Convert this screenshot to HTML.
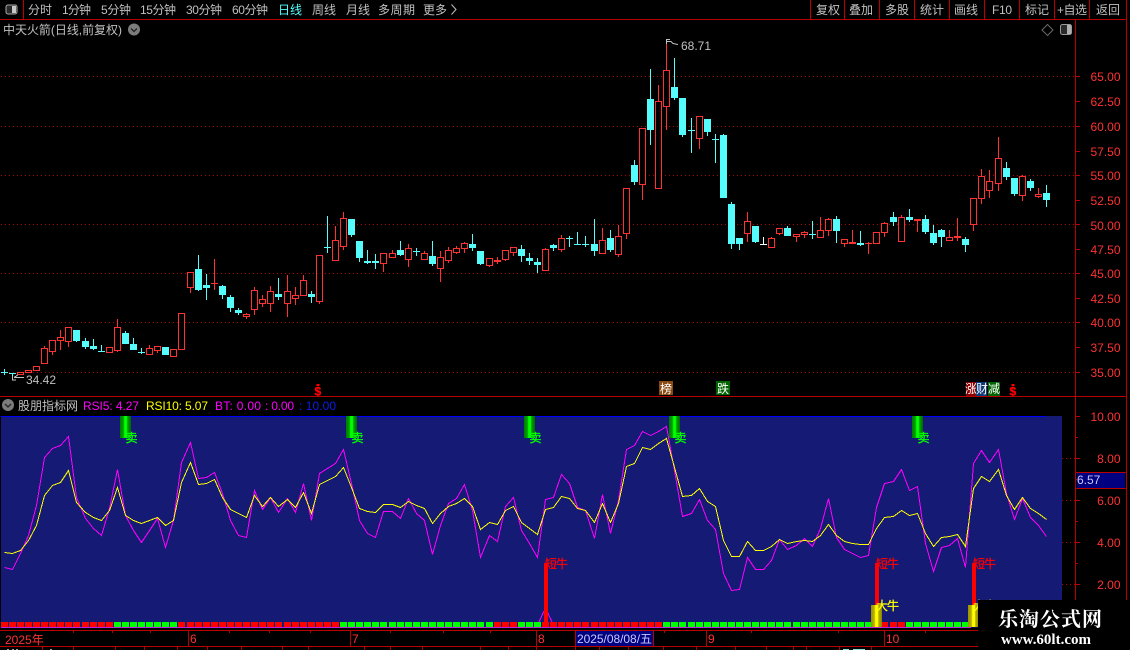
<!DOCTYPE html>
<html><head><meta charset="utf-8">
<style>
html,body{margin:0;padding:0;background:#000;width:1130px;height:650px;overflow:hidden}
svg{display:block;position:absolute;left:0;top:0}
text{font-family:"Liberation Sans","WenQuanYi Zen Hei","Noto Sans CJK SC",sans-serif;font-size:12px}
.m{fill:#c0c0c0}
.a{fill:#ff3232;text-anchor:end}
.d{fill:#ff3232}
</style></head>
<body>
<svg width="1130" height="650" viewBox="0 0 1130 650" xmlns="http://www.w3.org/2000/svg">
<defs>
<linearGradient id="gg" x1="0" x2="1" y1="0" y2="0"><stop offset="0" stop-color="#007a00"/><stop offset=".3" stop-color="#00a000"/><stop offset=".42" stop-color="#00ff00"/><stop offset=".6" stop-color="#00ff00"/><stop offset=".7" stop-color="#00a000"/><stop offset="1" stop-color="#006800"/></linearGradient>
<linearGradient id="yg" x1="0" x2="1" y1="0" y2="0"><stop offset="0" stop-color="#9a9000"/><stop offset=".3" stop-color="#b8b000"/><stop offset=".42" stop-color="#ffff00"/><stop offset=".6" stop-color="#ffff00"/><stop offset=".7" stop-color="#b8b000"/><stop offset="1" stop-color="#8a8000"/></linearGradient>
</defs>
<rect width="1130" height="650" fill="#000"/>

<!-- indicator background -->
<rect x="1" y="416" width="1061" height="211.5" fill="#151b74"/>

<!-- grid -->
<g stroke="#b00000" stroke-dasharray="1 3" shape-rendering="crispEdges" fill="none">
<path d="M1 76.5H1075M1 126.5H1075M1 175.5H1075M1 224.5H1075M1 273.5H1075M1 322.5H1075M1 372.5H1075"/>
<path d="M1062 458.5H1075M1062 500.5H1075M1062 542.5H1075M1062 584.5H1075"/>
</g>

<g id="cw" shape-rendering="crispEdges"></g>

<!-- frame lines -->
<g stroke="#b80000" stroke-width="1" shape-rendering="crispEdges" fill="none">
<path d="M0 19.5H1126.5M0 396.5H1126.5M0 630.5H1126.5M0 646.5H1126.5"/>
<path d="M23.5 0V19M810.5 0V19M844.5 0V19M879.5 0V19M914.5 0V19M949.5 0V19M984.5 0V19M1019.5 0V19M1054.5 0V19M1089.5 0V19"/>
<path d="M1075.5 19V630M1126.5 0V646"/>
<path d="M1075 472.5H1126M1075 488.5H1126"/>
<path d="M1075 76.5h5M1075 101.5h5M1075 126.5h5M1075 151.5h5M1075 175.5h5M1075 200.5h5M1075 224.5h5M1075 249.5h5M1075 273.5h5M1075 298.5h5M1075 322.5h5M1075 347.5h5M1075 372.5h5"/>
<path d="M1075 416.5h5M1075 458.5h5M1075 500.5h5M1075 542.5h5M1075 584.5h5M1075 437.5h3M1075 479.5h3M1075 521.5h3M1075 563.5h3M1075 605.5h3"/>
<path d="M188.5 631V646M350.5 631V646M536.5 631V646M706.5 631V646M884.5 631V646"/>
<path d="M73.5 631v2M112.5 631v2M150.5 631v2M229.5 631v2M269.5 631v2M310.5 631v2M390.5 631v2M443.5 631v2M490.5 631v2M664.5 631v2M751.5 631v2M838.5 631v2M925.5 631v2"/>
<path d="M42.5 647v3M73.5 647v3M115.5 647v3M144.5 647v3M177.5 647v3M207.5 647v3M241.5 647v3M282.5 647v3M308.5 647v3M364.5 647v3M390.5 647v3M422.5 647v3M480.5 647v3M508.5 647v3M536.5 647v3M575.5 647v3M599.5 647v3M628.5 647v3M663.5 647v3M696.5 647v3M735.5 647v3M766.5 647v3M793.5 647v3M806.5 647v3M839.5 647v3M871.5 647v3"/>
</g>

<!-- top menu -->
<g>
<text class="m" x="28" y="14" textLength="24">分时</text>
<text class="m" x="62" y="14" textLength="29">1分钟</text>
<text class="m" x="101" y="14" textLength="30">5分钟</text>
<text class="m" x="140" y="14" textLength="36">15分钟</text>
<text class="m" x="186" y="14" textLength="36">30分钟</text>
<text class="m" x="232" y="14" textLength="36">60分钟</text>
<text x="278" y="14" textLength="24" fill="#55ffff">日线</text>
<text class="m" x="312" y="14" textLength="24">周线</text>
<text class="m" x="346" y="14" textLength="24">月线</text>
<text class="m" x="378" y="14" textLength="37">多周期</text>
<text class="m" x="423" y="14" textLength="24">更多</text>
<path d="M451.5 4.5L456 9.5L451.5 14.5" fill="none" stroke="#c0c0c0"/>
<text class="m" x="816" y="14" textLength="24">复权</text>
<text class="m" x="849" y="14" textLength="24">叠加</text>
<text class="m" x="885" y="14" textLength="24">多股</text>
<text class="m" x="920" y="14" textLength="24">统计</text>
<text class="m" x="954" y="14" textLength="24">画线</text>
<text class="m" x="992" y="14" textLength="20">F10</text>
<text class="m" x="1025" y="14" textLength="24">标记</text>
<text class="m" x="1057" y="14" textLength="30">+自选</text>
<text class="m" x="1096" y="14" textLength="24">返回</text>
</g>

<!-- left layout icon -->
<rect x="6" y="5" width="11" height="9" rx="2" fill="#2a2a2a" stroke="#a8a8a8"/>
<rect x="12" y="6" width="4" height="7" fill="#c8c8c8"/>

<!-- title row -->
<text class="m" x="3" y="34" textLength="119">中天火箭(日线,前复权)</text>
<circle cx="134" cy="29.5" r="6" fill="#7c7c7c"/>
<path d="M131 28.5L134 31.5L137 28.5" fill="none" stroke="#222" stroke-width="1.3"/>
<path d="M1047.5 24.5L1053 30L1047.5 35.5L1042 30Z" fill="none" stroke="#686868"/>
<rect x="1060.5" y="24.5" width="11" height="10" rx="2" fill="#2a2a2a" stroke="#9a9a9a"/>
<rect x="1067" y="25" width="4" height="9" fill="#b0b0b0"/>

<!-- axis labels main -->
<g>
<text class="a" x="1120.5" y="81">65.00</text>
<text class="a" x="1120.5" y="106">62.50</text>
<text class="a" x="1120.5" y="131">60.00</text>
<text class="a" x="1120.5" y="156">57.50</text>
<text class="a" x="1120.5" y="180">55.00</text>
<text class="a" x="1120.5" y="205">52.50</text>
<text class="a" x="1120.5" y="230">50.00</text>
<text class="a" x="1120.5" y="254">47.50</text>
<text class="a" x="1120.5" y="278">45.00</text>
<text class="a" x="1120.5" y="303">42.50</text>
<text class="a" x="1120.5" y="327">40.00</text>
<text class="a" x="1120.5" y="352">37.50</text>
<text class="a" x="1120.5" y="377">35.00</text>
<text class="a" x="1120.5" y="421">10.00</text>
<text class="a" x="1120.5" y="463">8.00</text>
<text class="a" x="1120.5" y="505">6.00</text>
<text class="a" x="1120.5" y="547">4.00</text>
<text class="a" x="1120.5" y="589">2.00</text>
</g>
<rect x="1077" y="473" width="48" height="15" fill="#000080"/>
<text x="1077" y="484" fill="#c8c8ff">6.57</text>

<!-- high/low annotations -->
<path d="M24 377.5H14M14 377.5L18 375M12.5 376V380H16" fill="none" stroke="#c0c0c0" shape-rendering="crispEdges"/>
<text class="m" x="26" y="384">34.42</text>
<path d="M666.5 44V39.5H670M667 41.5H671L673 43.5L678 44.5" fill="none" stroke="#c0c0c0"/>
<text class="m" x="681" y="50">68.71</text>

<!-- markers on main -->
<path d="M318 384v2" stroke="#ff0000" stroke-width="3"/>
<text x="314.5" y="395.5" fill="#ff0000" stroke="#ff0000" stroke-width=".3" style="font-size:12px;font-weight:bold">$</text>
<path d="M1013 384v2" stroke="#ff0000" stroke-width="3"/>
<text x="1009.5" y="395.5" fill="#ff0000" stroke="#ff0000" stroke-width=".3" style="font-size:12px;font-weight:bold">$</text>
<rect x="659" y="381" width="14" height="14" fill="#8b4a10"/><text x="660" y="393" fill="#fff">榜</text>
<rect x="716" y="381" width="14" height="14" fill="#006400"/><text x="717" y="393" fill="#fff">跌</text>
<rect x="966" y="382" width="10" height="14" fill="#8b0000"/><text x="965" y="393" fill="#fff">涨</text>
<rect x="976" y="382" width="11" height="14" fill="#0a3a78"/><text x="976" y="393" fill="#fff">财</text>
<rect x="988" y="382" width="12" height="14" fill="#006400"/><text x="988" y="393" fill="#fff">减</text>

<!-- indicator header -->
<circle cx="8" cy="405" r="6" fill="#7c7c7c"/>
<path d="M5 404L8 407L11 404" fill="none" stroke="#222" stroke-width="1.3"/>
<text class="m" x="18" y="410" textLength="60">股朋指标网</text>
<text x="83" y="410" fill="#ff00ff" textLength="56">RSI5: 4.27</text>
<text x="146" y="410" fill="#ffff00" textLength="62">RSI10: 5.07</text>
<text x="215" y="410" fill="#ff00ff" textLength="46">BT: 0.00</text>
<text x="265" y="410" fill="#ff00ff" textLength="29">: 0.00</text>
<text x="299" y="410" fill="#0a1fe8" textLength="37">: 10.00</text>

<!-- blue top line -->
<rect x="1" y="416" width="1045" height="1" fill="#0000ff"/>

<g id="ln" shape-rendering="crispEdges"></g>

<!-- spikes at bars -->
<path d="M539 622L544 611M552 622L547 611" stroke="#ff00ff" fill="none" shape-rendering="crispEdges"/>

<!-- sell bars -->
<g fill="url(#gg)">
<rect x="120" y="416" width="11" height="22"/>
<rect x="346" y="416" width="11" height="22"/>
<rect x="524" y="416" width="11" height="22"/>
<rect x="669" y="416" width="11" height="22"/>
<rect x="912" y="416" width="11" height="22"/>
</g>
<g fill="#00ff00" stroke="#00ff00" stroke-width=".35">
<text x="125.5" y="442">卖</text>
<text x="351.5" y="442">卖</text>
<text x="529.5" y="442">卖</text>
<text x="674.5" y="442">卖</text>
<text x="917.5" y="442">卖</text>
</g>

<!-- strip -->
<g id="st" shape-rendering="crispEdges"></g>

<!-- red bars -->
<g fill="#ff0000">
<rect x="544" y="563" width="4" height="64"/>
<rect x="875" y="563" width="4" height="64"/>
<rect x="972" y="563" width="4" height="64"/>
</g>
<!-- yellow bars -->
<rect x="871" y="605" width="11" height="22" fill="url(#yg)"/>
<rect x="968" y="605" width="11" height="22" fill="url(#yg)"/>
<g fill="#ff0000" stroke="#ff0000" stroke-width=".3">
<text x="545" y="568" textLength="23">短牛</text>
<text x="876" y="568" textLength="23">短牛</text>
<text x="973" y="568" textLength="23">短牛</text>
</g>
<g fill="#ffff00" stroke="#ffff00" stroke-width=".3">
<text x="876" y="610" textLength="23">大牛</text>
<text x="973" y="610" textLength="23">大牛</text>
</g>

<!-- date axis -->
<text class="d" x="5" y="644">2025年</text>
<text class="d" x="190" y="643">6</text>
<text class="d" x="352" y="643">7</text>
<text class="d" x="538" y="643">8</text>
<text class="d" x="708" y="643">9</text>
<text class="d" x="886" y="643">10</text>
<rect x="575.5" y="630.5" width="78" height="16" fill="#000080" stroke="#b80000" shape-rendering="crispEdges"/>
<text x="577" y="643" fill="#c8c8ff" textLength="75">2025/08/08/五</text>

<!-- bottom cut text remnants -->
<g fill="#a0a0a0" shape-rendering="crispEdges">
<rect x="7" y="649" width="2" height="1"/><rect x="12" y="649" width="2" height="1"/><rect x="16" y="649" width="2" height="1"/><rect x="50" y="649" width="2" height="1"/>
<rect x="843" y="649" width="6" height="1" fill="#8adede"/><rect x="853" y="649" width="12" height="1" fill="#8adede"/>
</g>

<!-- watermark -->
<rect x="978" y="600" width="152" height="50" fill="#000"/>
<text x="998" y="626" fill="#fff" textLength="104" style="font-family:'Noto Serif CJK SC','Liberation Serif',serif;font-size:20px;font-weight:bold">乐淘公式网</text>
<text x="1001" y="644" fill="#fff" textLength="90" style="font-family:'Liberation Serif',serif;font-size:15px;font-weight:bold">www.60lt.com</text>
</svg>

<script>
var C="c372 373 369 375;c373 374 373 377;r372 375 372 375;r370 373 370 373;r366 371 366 371;r348 364 346 364;r340 352 340 355;r337 341 330 350;r327 342 327 347;c330 341 330 342;c341 347 338 349;c346 349 339 350;c351 352 345 352;r347 353 347 353;r327 351 319 352;c333 344 331 344;c344 350 338 350;c352 353 348 354;r348 355 345 355;r346 351 346 353;c347 355 347 355;r349 357 349 357;r313 350 313 350;r272 288 272 293;c269 290 255 291;c285 288 274 300;r283 284 259 290;c286 295 285 299;c297 308 295 312;c310 313 308 315;r314 317 313 319;r290 310 287 315;r299 304 295 307;r291 304 286 312;c294 297 278 300;r291 304 275 317;r295 299 287 305;r280 296 275 296;c294 297 291 303;r255 302 255 304;c247 248 216 253;r240 261 226 261;r218 247 212 250;c219 235 219 237;c241 258 241 262;c261 263 250 264;c261 263 254 269;r253 264 253 272;r253 258 250 258;c250 255 241 256;r248 260 244 267;c251 252 248 256;r253 260 251 260;c256 264 241 266;r257 269 251 282;r250 261 247 263;r248 253 246 254;r243 249 242 253;c244 248 234 251;c251 264 251 265;r258 266 258 267;r260 262 257 264;r250 260 250 261;r247 253 247 256;c249 256 245 262;c258 261 253 265;c262 265 258 273;r249 271 248 271;c245 248 244 251;r238 250 235 252;c238 239 236 247;c244 245 232 245;c244 245 236 247;c244 251 219 256;r240 254 228 254;c238 250 230 252;r236 255 225 257;r188 234 188 239;c165 182 160 185;r128 185 128 200;c99 130 69 145;r101 189 85 189;r70 107 43 130;c87 98 58 100;c98 135 98 137;c130 131 118 153;r116 139 116 149;c119 132 119 136;c139 140 134 163;c135 198 134 198;c204 244 202 249;c238 244 238 250;r221 234 212 242;c226 242 226 243;w244 245 237 245;r238 248 237 248;r228 234 228 235;c228 236 226 236;r234 237 234 242;r232 235 231 238;c234 235 221 239;r230 238 217 238;r219 231 218 236;c219 231 216 243;r239 244 239 247;r242 244 230 244;c243 245 231 246;r243 244 242 254;r232 244 232 244;r223 233 222 237;c217 222 212 226;r217 242 215 242;c217 220 209 222;r219 221 219 232;c219 232 215 234;c233 243 225 245;c230 237 229 247;r237 241 230 241;r236 238 218 241;c239 245 237 252;r198 225 198 231;r176 199 169 204;r181 191 170 198;r158 184 137 191;c168 177 162 180;c178 194 178 196;r176 196 175 201;c181 188 179 191;r194 197 188 198;c193 200 185 207";
var Yv=[552,553,550,540,525,495,485,482,470,502,512,517,520,510,487,515,520,523,520,517,525,520,482,462,484,483,479,497,509,513,517,495,506,497,506,499,507,492,513,484,480,476,467,487,508,511,512,504,504,507,501,505,508,523,513,506,503,498,506,529,522,524,510,506,522,528,534,509,507,496,498,508,510,522,503,522,503,466,463,447,449,443,438,467,496,495,488,501,506,540,556,556,541,550,550,546,539,543,541,540,541,535,524,535,541,543,544,544,528,517,516,510,515,513,533,546,537,536,534,546,488,476,481,469,495,509,497,508,513,519];
var Mv=[567,569,553,535,505,457,448,445,436,497,518,528,535,508,469,515,530,542,530,518,547,520,462,442,478,477,472,493,520,535,537,490,509,497,512,498,512,483,520,473,468,463,449,483,520,533,537,511,511,518,498,513,520,554,525,503,498,484,510,557,535,541,506,497,530,543,557,499,497,474,483,507,510,538,494,533,500,449,445,431,435,431,426,470,516,513,499,520,529,573,590,589,557,569,569,560,539,549,545,538,546,528,498,537,549,553,557,555,507,483,481,469,490,486,543,571,547,545,538,567,463,450,462,449,493,519,498,517,525,536];
function X(i){return Math.floor(4.2+8.08*i)}
var col={r:'#ff3232',c:'#54fcfc',w:'#ffffff'},h='';
C.split(';').forEach(function(s,i){
 var t=s[0],p=s.slice(1).split(' ').map(Number),cx=X(i),c=col[t],top=p[0],bot=p[1],hi=p[2],lo=p[3];
 if(hi<top)h+='<rect x="'+cx+'" y="'+hi+'" width="1" height="'+(top-hi)+'" fill="'+c+'"/>';
 if(lo>bot)h+='<rect x="'+cx+'" y="'+bot+'" width="1" height="'+(lo-bot)+'" fill="'+c+'"/>';
 if(t!='r'||bot-top<=2)h+='<rect x="'+(cx-3)+'" y="'+top+'" width="7" height="'+(bot-top)+'" fill="'+c+'"/>';
 else h+='<rect x="'+(cx-2.5)+'" y="'+(top+.5)+'" width="6" height="'+(bot-top-1)+'" fill="#000" stroke="'+c+'"/>';
});
document.getElementById('cw').innerHTML=h;
function pl(a,c){return '<polyline fill="none" stroke="'+c+'" stroke-width="1" points="'+a.map(function(y,i){return (X(i)+.5)+','+(y+.5)}).join(' ')+'"/>'}
document.getElementById('ln').innerHTML=pl(Mv,'#ff00ff')+pl(Yv,'#ffff00');
var s='<rect x="1" y="627" width="970" height="1" fill="#c020e0"/>';
function kind(i){if(i<=13)return 'r';if(i<=21)return 'g';if(i<=41)return 'r';if(i<=60)return 'g';if(i<=63)return 'r';if(i<=66)return 'g';if(i<=81)return 'r';if(i<=107)return 'g';if(i==108)return '';if(i<=111)return 'r';if(i<=119)return 'g';return ''}
for(var i=0;i<122;i++){var k=kind(i);if(k)s+='<rect x="'+(X(i)-3)+'" y="622" width="7" height="5" fill="'+(k=='r'?'#ff0000':'#00ff00')+'"/>'}
document.getElementById('st').innerHTML=s;
</script>
</body></html>
